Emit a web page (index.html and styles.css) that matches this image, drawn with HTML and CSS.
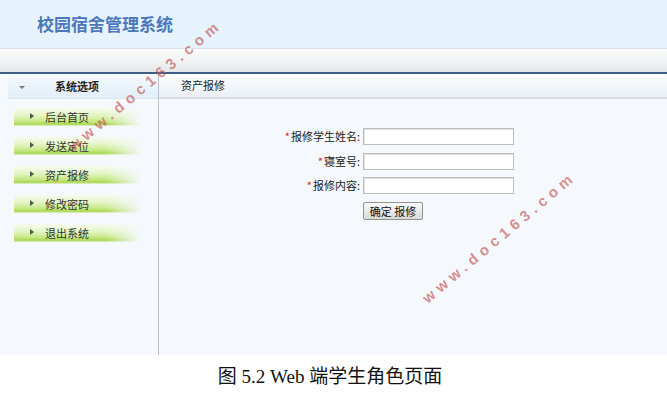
FILE: index.html
```html
<!DOCTYPE html>
<html lang="zh-CN">
<head>
<meta charset="utf-8">
<title>校园宿舍管理系统</title>
<link rel="stylesheet" href="styles.css">
</head>
<body>
<div class="app">
  <header class="top"><h1 class="title">校园宿舍管理系统</h1></header>
  <div class="band"></div>
  <div class="main">
    <aside class="side">
      <div class="side-head"><span class="caret"></span><span class="side-title">系统选项</span></div>
      <ul class="menu">
        <li class="item"><span class="arrow"></span>后台首页</li>
        <li class="item"><span class="arrow"></span>发送定位</li>
        <li class="item"><span class="arrow"></span>资产报修</li>
        <li class="item"><span class="arrow"></span>修改密码</li>
        <li class="item"><span class="arrow"></span>退出系统</li>
      </ul>
    </aside>
    <section class="content">
      <div class="tab">资产报修</div>
      <form class="form">
        <label class="label"><span class="req">*</span>报修学生姓名:</label><input class="field" type="text">
        <label class="label"><span class="req">*</span>寝室号:</label><input class="field" type="text">
        <label class="label"><span class="req">*</span>报修内容:</label><input class="field" type="text">
        <span></span><button class="btn" type="button">确定 报修</button>
      </form>
    </section>
  </div>
  <div class="wm wm1">www.doc163.com</div>
  <div class="wm wm2">www.doc163.com</div>
</div>
<p class="caption">图 5.2 Web 端学生角色页面</p>
</body>
</html>
```

FILE: styles.css
```css
* { box-sizing: border-box; }
html, body { margin: 0; padding: 0; background: #fff; }
body { width: 667px; font-family: "Noto Sans CJK SC", "Liberation Sans", sans-serif; }

.app {
  position: relative;
  width: 667px;
  height: 355px;
  display: flex;
  flex-direction: column;
  overflow: hidden;
  background: #f5f8fc;
}

.top {
  height: 49px;
  background: #e7f3fc;
  border-bottom: 1px solid #d9e2ea;
  display: flex;
  align-items: center;
  padding-left: 37px;
  flex: none;
}
.title {
  margin: 0;
  font-size: 17px;
  font-weight: bold;
  color: #4a78bb;
  line-height: 1;
  margin-top: -2px;
  font-family: "Noto Sans CJK SC", sans-serif;
}

.band {
  height: 25px;
  flex: none;
  background: linear-gradient(to bottom, #fbfbfb, #f2f3f4 50%, #e3e6e9);
  border-bottom: 2px solid #3e5e85;
}

.main {
  flex: 1;
  display: flex;
  min-height: 0;
}

.side {
  width: 159px;
  flex: none;
  border-right: 1px solid #b4c4d4;
  background: #f5f8fc;
}
.side-head {
  height: 25px;
  margin-left: 8px;
  display: flex;
  align-items: center;
  background: linear-gradient(to bottom, #f4f9fe, #e2eef9);
  border-bottom: 1px solid #dbe4ec;
  font-size: 11px;
  color: #222;
}
.caret {
  width: 0; height: 0;
  border-left: 3px solid transparent;
  border-right: 3px solid transparent;
  border-top: 3px solid #777;
  margin-left: 11px;
  margin-top: 2px;
}
.side-title {
  font-weight: bold;
  margin-left: 30px;
}

.menu {
  list-style: none;
  margin: 0;
  padding: 9px 0 0 14px;
  display: flex;
  flex-direction: column;
  gap: 11px;
}
.item {
  width: 127px;
  height: 18px;
  display: flex;
  align-items: center;
  font-size: 11px;
  color: #333;
  background:
    linear-gradient(to right, rgba(245,248,252,0) 72%, #f5f8fc 100%),
    linear-gradient(to bottom, #f7fbf0 0%, #e4f5c6 40%, #c6e884 75%, #a8d650 90%, #e8f3d8 100%);
}
.arrow {
  width: 0; height: 0;
  border-top: 3.5px solid transparent;
  border-bottom: 3.5px solid transparent;
  border-left: 4px solid #555;
  margin-left: 16px;
  margin-right: 11px;
  margin-top: -3px;
}

.content {
  flex: 1;
  display: flex;
  flex-direction: column;
  background: #f5f8fc;
}
.tab {
  height: 25px;
  flex: none;
  padding-left: 22px;
  display: flex;
  align-items: center;
  font-size: 11px;
  color: #222;
  background: linear-gradient(to bottom, #fdfeff, #eaf0f7);
  border-bottom: 2px solid #d6dde3;
  padding-bottom: 2px;
}

.form {
  margin-top: 29px;
  display: grid;
  grid-template-columns: 204px 151px;
  row-gap: 7.5px;
  align-items: center;
}
.label {
  text-align: right;
  font-size: 11px;
  color: #222;
  padding-right: 3px;
  line-height: 17px;
}
.req { color: #d22; margin-right: 1px; }
.field {
  width: 151px;
  height: 17px;
  margin: 0;
  padding: 0 2px;
  border: 1px solid #bdbdbd;
  box-shadow: inset 1px 1px 0 #e2e2e2;
  background: #fff;
  font-size: 11px;
}
.btn {
  justify-self: start;
  margin-top: 0.5px;
  width: 60px;
  height: 18px;
  padding: 0;
  border: 1px solid #929292;
  border-radius: 2px;
  background: linear-gradient(to bottom, #fbfbfb, #e6e6e6 60%, #d8d8d8);
  font-family: "Noto Sans CJK SC", sans-serif;
  font-size: 11px;
  color: #111;
  line-height: 16px;
}

.wm {
  position: absolute;
  transform: translate(-50%, -50%) rotate(-40deg);
  font-family: "Liberation Sans", sans-serif;
  font-size: 15px;
  font-weight: bold;
  letter-spacing: 5px;
  color: rgba(195, 80, 80, 0.65);
  white-space: nowrap;
  pointer-events: none;
}
.wm1 { left: 145px; top: 85px; }
.wm2 { left: 499px; top: 237px; }

.caption {
  margin: 0;
  height: 39px;
  display: flex;
  align-items: center;
  justify-content: center;
  padding-right: 7px;
  font-family: "Liberation Serif", "Noto Sans CJK SC", serif;
  font-size: 19px;
  color: #111;
}
```
